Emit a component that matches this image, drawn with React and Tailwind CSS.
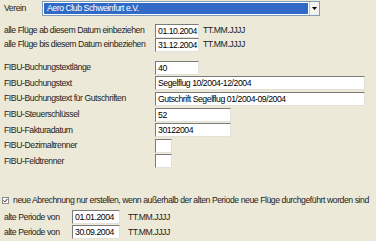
import React from 'react';

const Field = ({ value, w }) => (
  <div
    className={`h-[14px] ${w} bg-white border border-t-[#7b7b7b] border-l-[#7b7b7b] border-b-[#e4e2d8] border-r-[#e4e2d8] pl-[2px] leading-[12px] text-black overflow-hidden whitespace-nowrap`}
  >
    {value}
  </div>
);

const fibuRows = [
  { label: 'FIBU-Buchungstextlänge', value: '40', w: 'w-[44px]' },
  { label: 'FIBU-Buchungstext', value: 'Segelflug 10/2004-12/2004', w: 'w-[210px]' },
  { label: 'FIBU-Buchungstext für Gutschriften', value: 'Gutschrift Segelflug 01/2004-09/2004', w: 'w-[210px]' },
  { label: 'FIBU-Steuerschlüssel', value: '52', w: 'w-[76px]' },
  { label: 'FIBU-Fakturadatum', value: '30122004', w: 'w-[76px]' },
  { label: 'FIBU-Dezimaltrenner', value: '', w: 'w-[17px]' },
  { label: 'FIBU-Feldtrenner', value: '', w: 'w-[17px]' },
];

export default function App() {
  return (
    <div
      className="w-[376px] h-[241px] bg-[#ece9d8] text-[#1c1c1c] text-[8.7px] tracking-[-0.45px] overflow-hidden whitespace-nowrap"
      style={{ fontFamily: '"Liberation Sans", Arial, sans-serif' }}
    >
      {/* Verein */}
      <div className="flex items-center h-[16px] pt-[1px]">
        <div className="w-[42px] pl-[4px]">Verein</div>
        <div className="flex w-[278px] h-[15px] border border-[#7f9db9] bg-white">
          <div className="flex-1 m-[1px] bg-[#3169c6] text-white pl-[3px] leading-[11px]">
            Aero Club Schweinfurt e.V.
          </div>
          <div className="w-[10px] flex items-center justify-center bg-[#f4f3ee] border-l border-[#c9c7ba]">
            <svg width="5" height="3" viewBox="0 0 5 3">
              <path d="M0 0h5L2.5 3z" fill="#000" />
            </svg>
          </div>
        </div>
      </div>

      {/* Datum */}
      <div className="flex flex-col mt-[8px]">
        {[
          ['alle Flüge ab diesem Datum einbeziehen', '01.10.2004'],
          ['alle Flüge bis diesem Datum einbeziehen', '31.12.2004'],
        ].map(([label, value]) => (
          <div key={label} className="flex items-center h-[14px]">
            <div className="w-[155px] pl-[4px]">{label}</div>
            <Field value={value} w="w-[44px]" />
            <div className="ml-[4px]">TT.MM.JJJJ</div>
          </div>
        ))}
      </div>

      {/* FIBU */}
      <div className="flex flex-col mt-[8px]">
        {fibuRows.map((r) => (
          <div key={r.label} className="flex items-center h-[15.6px]">
            <div className="w-[155px] pl-[4px]">{r.label}</div>
            <Field value={r.value} w={r.w} />
          </div>
        ))}
      </div>

      {/* Abrechnung */}
      <div className="flex items-center h-[14px] mt-[24px]">
        <div className="ml-[2px] mr-[4px] w-[7px] h-[7px] border border-[#8a8a8a] bg-white flex items-center justify-center">
          <svg width="5" height="5" viewBox="0 0 5 5">
            <path d="M0.5 2.5l1.3 1.5L4.5 0.8" stroke="#222" strokeWidth="1" fill="none" />
          </svg>
        </div>
        <div>
          neue Abrechnung nur erstellen, wenn außerhalb der alten Periode neue Flüge durchgeführt worden sind
        </div>
      </div>
      <div className="flex flex-col mt-[3px] gap-[1px]">
        {['01.01.2004', '30.09.2004'].map((v) => (
          <div key={v} className="flex items-center h-[14px]">
            <div className="w-[72px] pl-[4px]">alte Periode von</div>
            <Field value={v} w="w-[48px]" />
            <div className="ml-[8px]">TT.MM.JJJJ</div>
          </div>
        ))}
      </div>
    </div>
  );
}
